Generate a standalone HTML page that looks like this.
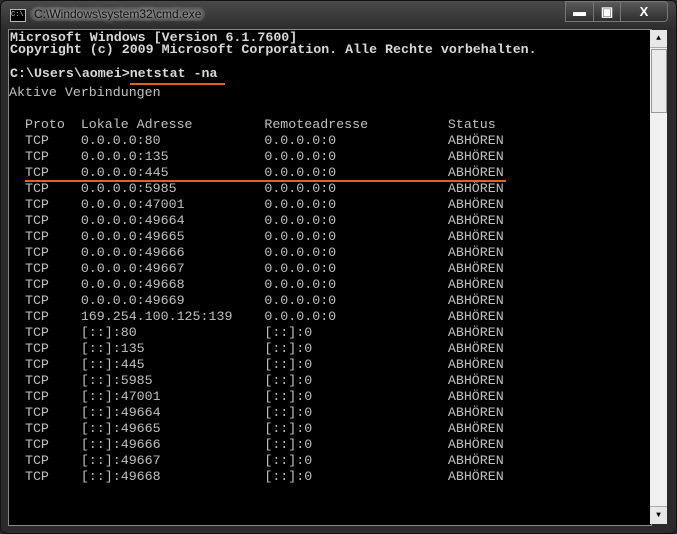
<!DOCTYPE html><html><head><style>
*{margin:0;padding:0}
body{width:677px;height:534px;overflow:hidden;background:#2c2c2c;position:relative;font-family:"Liberation Mono",monospace}
.frame{position:absolute;left:0;top:0;width:675px;height:532px;border:1px solid #111;border-radius:6px;background:linear-gradient(#4a4a4a,#2a2a2a 30px,#2a2a2a)}
.title{position:absolute;left:30px;top:7px;font:12px "Liberation Sans",sans-serif;color:#111;text-shadow:0 0 6px #bbb,0 0 4px #ccc;background:rgba(180,180,180,.15);padding:0 4px;border-radius:8px}
.ico{position:absolute;left:10px;top:9px;width:14px;height:11px;background:#000;border:1px solid #bbb;font:7px "Liberation Mono";color:#ccc;line-height:10px}
.btn{position:absolute;top:1px;height:19px;border:1px solid #777;background:linear-gradient(#5a5a5a,#2e2e2e);color:#fff;text-align:center;font:bold 13px "Liberation Sans";line-height:19px}
.con{position:absolute;left:8px;top:29px;width:642px;height:495px;background:#000;border:1px solid #888}
.sb{position:absolute;left:650px;top:30px;width:17px;height:494px;background:#f0f0f0}
.t{position:absolute;color:#c0c0c0;font-size:13.3px;white-space:pre;line-height:16px}
.b{color:#d8d8d8;font-weight:bold;letter-spacing:0}
.or{position:absolute;height:2px;background:#e5601f}
</style></head><body>
<div class="frame"></div>
<div class="ico">C:\</div>
<div class="title">C:\Windows\system32\cmd.exe</div>
<div class="btn" style="left:565px;width:27px">&#9644;</div>
<div class="btn" style="left:593px;width:26px">&#9635;</div>
<div class="btn" style="left:620px;width:46px;border-radius:0 4px 4px 0">X</div>
<div class="con"></div>
<div class="sb">
<div style="position:absolute;left:0;top:0;width:17px;height:17px;background:#e8e8e8;border-bottom:1px solid #aaa;font-size:8px;text-align:center;line-height:17px">&#9650;</div>
<div style="position:absolute;left:1px;top:19px;width:14px;height:62px;background:#ebebeb;border:1px solid #999"></div>
<div style="position:absolute;left:0;bottom:0;width:17px;height:17px;background:#e8e8e8;border-top:1px solid #aaa;font-size:8px;text-align:center;line-height:17px">&#9660;</div>
</div>
<div class="t b" style="left:10px;top:30px">Microsoft Windows [Version 6.1.7600]</div>
<div class="t b" style="left:10px;top:42px">Copyright (c) 2009 Microsoft Corporation. Alle Rechte vorbehalten.</div>
<div class="t b" style="left:10px;top:66px">C:\Users\aomei&gt;netstat -na</div>
<div class="or" style="left:130px;top:83px;width:95px"></div>
<div class="t" style="left:9px;top:85px">Aktive Verbindungen</div>
<div class="t" style="left:9px;top:117px">  Proto  Lokale Adresse         Remoteadresse          Status
  TCP    0.0.0.0:80             0.0.0.0:0              ABHÖREN
  TCP    0.0.0.0:135            0.0.0.0:0              ABHÖREN
  TCP    0.0.0.0:445            0.0.0.0:0              ABHÖREN
  TCP    0.0.0.0:5985           0.0.0.0:0              ABHÖREN
  TCP    0.0.0.0:47001          0.0.0.0:0              ABHÖREN
  TCP    0.0.0.0:49664          0.0.0.0:0              ABHÖREN
  TCP    0.0.0.0:49665          0.0.0.0:0              ABHÖREN
  TCP    0.0.0.0:49666          0.0.0.0:0              ABHÖREN
  TCP    0.0.0.0:49667          0.0.0.0:0              ABHÖREN
  TCP    0.0.0.0:49668          0.0.0.0:0              ABHÖREN
  TCP    0.0.0.0:49669          0.0.0.0:0              ABHÖREN
  TCP    169.254.100.125:139    0.0.0.0:0              ABHÖREN
  TCP    [::]:80                [::]:0                 ABHÖREN
  TCP    [::]:135               [::]:0                 ABHÖREN
  TCP    [::]:445               [::]:0                 ABHÖREN
  TCP    [::]:5985              [::]:0                 ABHÖREN
  TCP    [::]:47001             [::]:0                 ABHÖREN
  TCP    [::]:49664             [::]:0                 ABHÖREN
  TCP    [::]:49665             [::]:0                 ABHÖREN
  TCP    [::]:49666             [::]:0                 ABHÖREN
  TCP    [::]:49667             [::]:0                 ABHÖREN
  TCP    [::]:49668             [::]:0                 ABHÖREN</div>
<div class="or" style="left:25px;top:180px;width:481px"></div>
</body></html>
